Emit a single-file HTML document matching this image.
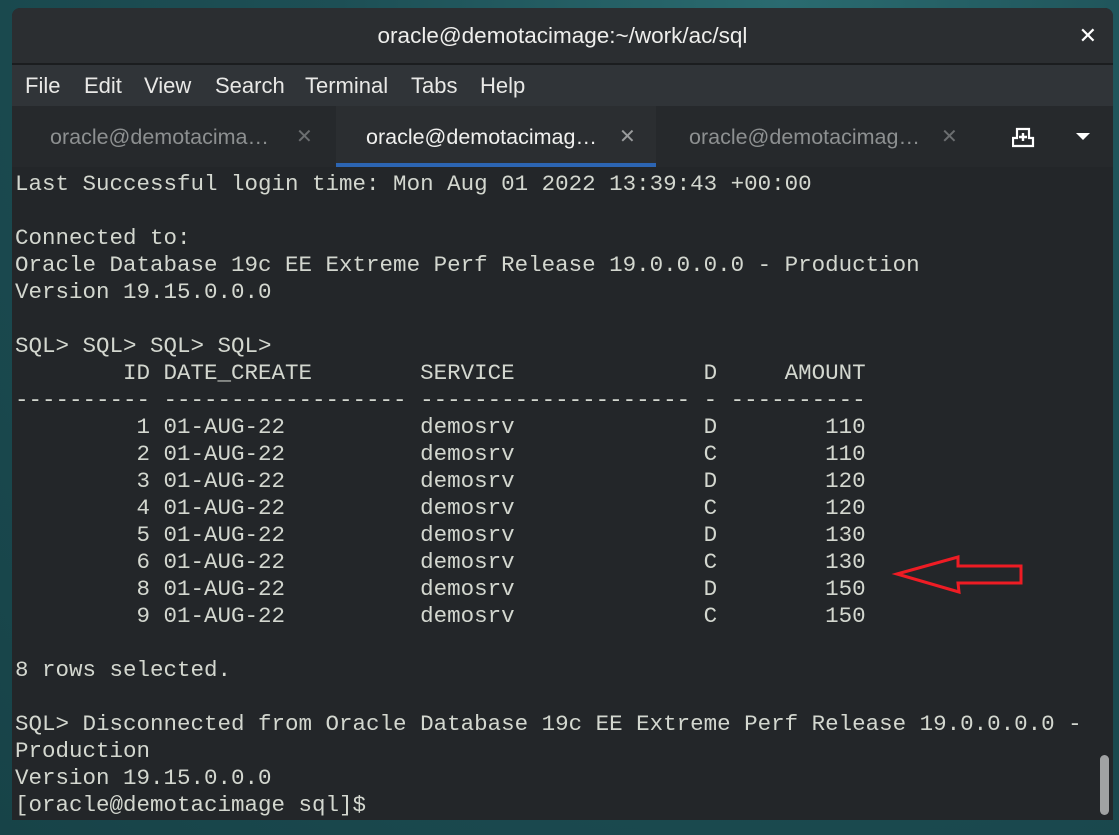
<!DOCTYPE html>
<html><head><meta charset="utf-8"><style>
html,body{margin:0;padding:0;}
body{width:1119px;height:835px;overflow:hidden;background:#1d4f55;position:relative;font-family:"Liberation Sans","DejaVu Sans",sans-serif;}
.bg1{position:absolute;left:0;top:0;width:1119px;height:835px;background:radial-gradient(ellipse at 70% 0%,#2a6b70 0%,#1d4f55 40%,#174348 100%);}
.win{position:absolute;left:12px;top:8px;width:1101px;height:812px;background:#232629;border-radius:8px 8px 0 0;overflow:hidden;}
.title{position:absolute;left:0;top:0;width:100%;height:55px;background:#2b2e31;border-bottom:2px solid #1b1d1f;color:#eeeeec;font-size:22.5px;text-align:center;line-height:56px;}
.close{position:absolute;right:16px;top:0;font-size:22px;font-weight:bold;color:#fff;}
.menu{position:absolute;left:0;top:57px;width:100%;height:41px;background:#303438;color:#e8e8e6;font-size:22px;line-height:42px;}
.menu span{position:absolute;top:0;}
.tabs{position:absolute;left:0;top:98px;width:100%;height:61px;background:#26292c;}
.tab{position:absolute;top:0;height:61px;line-height:62px;font-size:21.5px;color:#8d9091;}
.tab .x{position:absolute;font-size:20px;color:#6b6e70;}
.act{background:#2b2e31;color:#f0f0ee;border-bottom:4px solid #2c65b3;box-sizing:border-box;}
.term{position:absolute;left:3px;top:163px;font-family:"Liberation Mono","DejaVu Sans Mono",monospace;font-size:22.5px;line-height:27px;color:#d3d7cf;white-space:pre;}
.sb{position:absolute;left:1088px;top:747px;width:9px;height:60px;background:#a0a2a3;border-radius:5px;}
</style></head><body>
<div class="bg1"></div>
<div class="win">
 <div class="title">oracle@demotacimage:~/work/ac/sql<span class="close">✕</span></div>
 <div class="menu"><span style="left:13px">File</span><span style="left:72px">Edit</span><span style="left:132px">View</span><span style="left:203px">Search</span><span style="left:293px">Terminal</span><span style="left:399px">Tabs</span><span style="left:468px">Help</span></div>
 <div class="tabs">
  <div class="tab" style="left:0;width:324px;"><span style="position:absolute;left:38px;">oracle@demotacima…</span><span class="x" style="left:284px;">✕</span></div>
  <div class="tab act" style="left:324px;width:320px;"><span style="position:absolute;left:30px;">oracle@demotacimag…</span><span class="x" style="left:283px;color:#9a9c9d;">✕</span></div>
  <div class="tab" style="left:644px;width:320px;"><span style="position:absolute;left:33px;">oracle@demotacimag…</span><span class="x" style="left:285px;">✕</span></div>
  <svg style="position:absolute;left:1000px;top:20px" width="26" height="24" viewBox="0 0 26 24"><path d="M5 3H17V12H21V20H1V12H5Z" fill="none" stroke="#fff" stroke-width="2.2"/><path d="M11 7V15M7 11H15" stroke="#fff" stroke-width="2.4"/></svg>
  <svg style="position:absolute;left:1063px;top:26px" width="16" height="10"><path d="M1 1H15L8 8Z" fill="#fff"/></svg>
 </div>
 <div class="term">Last Successful login time: Mon Aug 01 2022 13:39:43 +00:00

Connected to:
Oracle Database 19c EE Extreme Perf Release 19.0.0.0.0 - Production
Version 19.15.0.0.0

SQL&gt; SQL&gt; SQL&gt; SQL&gt;
        ID DATE_CREATE        SERVICE              D     AMOUNT
---------- ------------------ -------------------- - ----------
         1 01-AUG-22          demosrv              D        110
         2 01-AUG-22          demosrv              C        110
         3 01-AUG-22          demosrv              D        120
         4 01-AUG-22          demosrv              C        120
         5 01-AUG-22          demosrv              D        130
         6 01-AUG-22          demosrv              C        130
         8 01-AUG-22          demosrv              D        150
         9 01-AUG-22          demosrv              C        150

8 rows selected.

SQL&gt; Disconnected from Oracle Database 19c EE Extreme Perf Release 19.0.0.0.0 -
Production
Version 19.15.0.0.0
[oracle@demotacimage sql]$</div>
 <div class="sb"></div>
</div>
<svg style="position:absolute;left:0;top:0" width="1119" height="835"><polygon points="897,574 958,557 958,566 1021,566 1021,583 958,583 959,592" fill="none" stroke="#ee1c24" stroke-width="3"/></svg>
</body></html>
